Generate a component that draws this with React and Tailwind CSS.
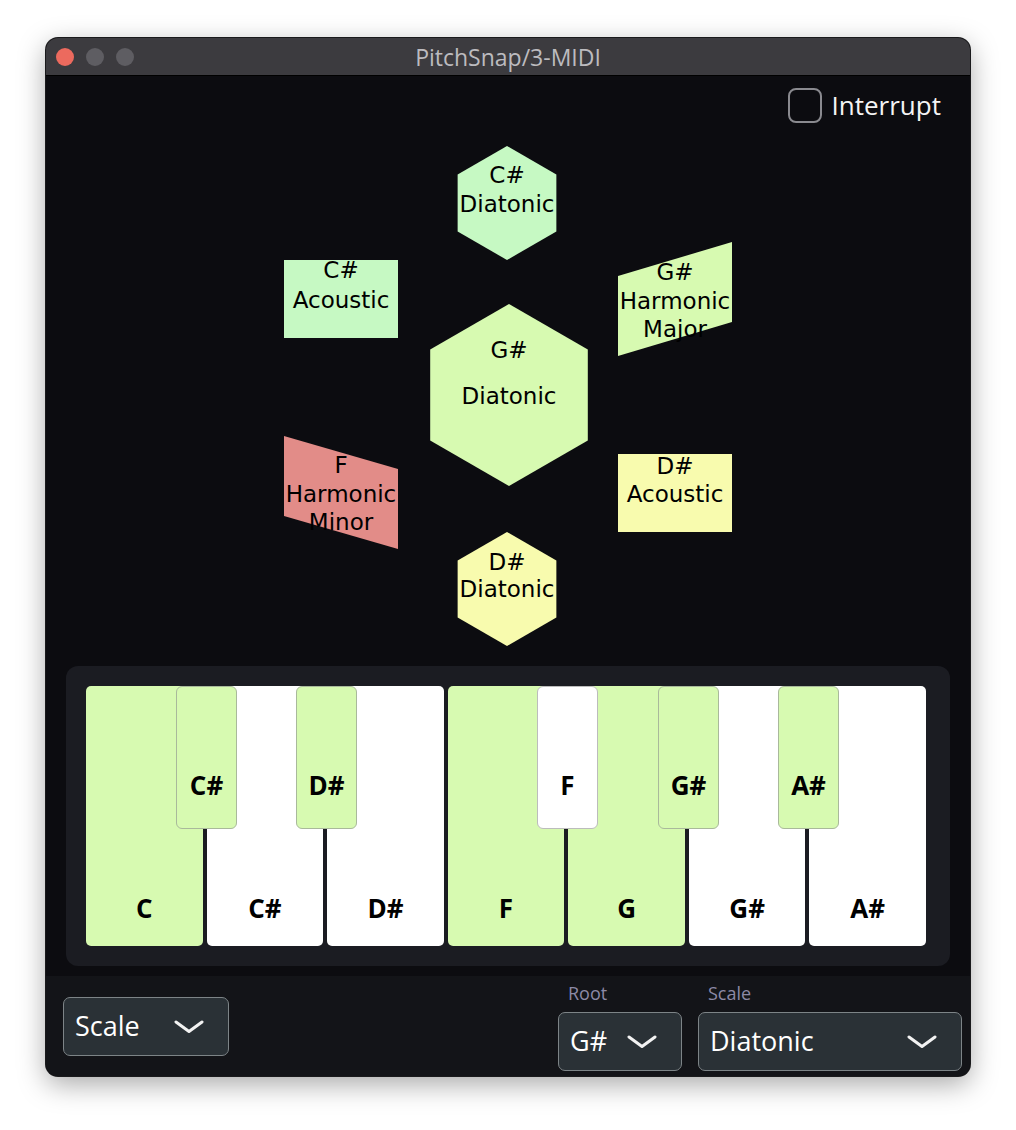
import React from 'react';

const hexPoints = (cx, cy, r) => {
  const w = (Math.sqrt(3) / 2) * r;
  return [
    [cx, cy - r],
    [cx + w, cy - r / 2],
    [cx + w, cy + r / 2],
    [cx, cy + r],
    [cx - w, cy + r / 2],
    [cx - w, cy - r / 2],
  ]
    .map((p) => p.join(','))
    .join(' ');
};

// shapes of the scale map, in page coordinates
const shapes = [
  { points: hexPoints(507, 203, 57), fill: '#c6f9c3', x: 507, lines: [['C#', 183], ['Diatonic', 212]] },
  { points: '284,260 398,260 398,338 284,338', fill: '#c6f9c3', x: 341, lines: [['C#', 278], ['Acoustic', 308]] },
  { points: '618,276 732,242 732,322 618,356', fill: '#d7fab1', x: 675, lines: [['G#', 280], ['Harmonic', 309], ['Major', 337]] },
  { points: hexPoints(509, 395, 91), fill: '#d7fab1', x: 509, lines: [['G#', 358], ['Diatonic', 404]] },
  { points: '284,436 398,469 398,549 284,516', fill: '#e28c88', x: 341, lines: [['F', 473], ['Harmonic', 502], ['Minor', 530]] },
  { points: '618,454 732,454 732,532 618,532', fill: '#f8fbae', x: 675, lines: [['D#', 474], ['Acoustic', 502]] },
  { points: hexPoints(507, 589, 57), fill: '#f8fbae', x: 507, lines: [['D#', 570], ['Diatonic', 597]] },
];

const whiteKeys = [
  { label: 'C', on: true },
  { label: 'C#', on: false },
  { label: 'D#', on: false },
  { label: 'F', on: true },
  { label: 'G', on: true },
  { label: 'G#', on: false },
  { label: 'A#', on: false },
];

const blackKeys = [
  { label: 'C#', on: true, pos: 'left-[90px]' },
  { label: 'D#', on: true, pos: 'left-[210px]' },
  { label: 'F', on: false, pos: 'left-[451px]' },
  { label: 'G#', on: true, pos: 'left-[572px]' },
  { label: 'A#', on: true, pos: 'left-[692px]' },
];

function Chevron() {
  return (
    <svg width="30" height="14" viewBox="0 0 30 14" fill="none">
      <path d="M2 2 L15 11.5 L28 2" stroke="#f2f2f2" strokeWidth="3" strokeLinecap="round" strokeLinejoin="round" />
    </svg>
  );
}

function Dropdown({ value, width }) {
  return (
    <div
      className={`${width} h-[59px] flex items-center justify-between pl-[11px] pr-[24px] rounded-[7px] border-[1.5px] border-[#7d8487] bg-[#2a3136] text-[27px] text-white`}
    >
      <span>{value}</span>
      <Chevron />
    </div>
  );
}

export default function App() {
  return (
    <div className="w-[1016px] h-[1130px] bg-white pt-[38px] pl-[46px]" style={{ fontFamily: '"Open Sans", "Noto Sans", sans-serif' }}>
      <div className="w-[924px] h-[1038px] rounded-[12px] overflow-hidden shadow-[0_0_0_1px_#1a1a1c,0_8px_28px_rgba(0,0,0,0.35)] flex flex-col bg-[#0c0c10]">
        {/* Title bar */}
        <div className="h-[38px] shrink-0 bg-[#3c3b3f] relative flex items-center justify-center border-b border-black">
          <div className="absolute left-[10px] top-[10px] flex gap-[12px]">
            <span className="w-[18px] h-[18px] rounded-full bg-[#ec6a5e]" />
            <span className="w-[18px] h-[18px] rounded-full bg-[#5e5d62]" />
            <span className="w-[18px] h-[18px] rounded-full bg-[#5e5d62]" />
          </div>
          <span className="text-[23px] leading-[30px] text-[#bcbbbf]">PitchSnap/3-MIDI</span>
        </div>

        {/* Main */}
        <div className="flex-1 flex flex-col">
          <div className="relative h-[590px]">
            <svg className="absolute inset-0" width="924" height="590" viewBox="46 76 924 590">
              {shapes.map((s, i) => (
                <g key={i}>
                  <polygon points={s.points} fill={s.fill} />
                  {s.lines.map(([t, y]) => (
                    <text
                      key={t + y}
                      x={s.x}
                      y={y}
                      textAnchor="middle"
                      fill="#000"
                      fontSize="23"
                      fontFamily='"DejaVu Sans", sans-serif'
                    >
                      {t}
                    </text>
                  ))}
                </g>
              ))}
            </svg>
            <div className="relative flex justify-end pt-[10px] pr-[29px]">
              <label className="flex items-center gap-[10px] text-[26px] text-[#f4f4f4]">
                <span className="w-[34px] h-[35px] rounded-[8px] border-2 border-[#8a8a8f]" />
                <span>Interrupt</span>
              </label>
            </div>
          </div>

          {/* Keyboard */}
          <div className="mx-[20px] h-[300px] rounded-[12px] bg-[#1b1c22] pt-[20px] pl-[20px]">
            <div className="relative w-[840px] h-[260px] grid grid-cols-7 gap-[4px]">
              {whiteKeys.map((k) => (
                <div
                  key={k.label}
                  className={`rounded-[5px] flex items-end justify-center pb-[25px] text-[26px] leading-[26px] font-bold text-black ${
                    k.on ? 'bg-[#d7fab1]' : 'bg-white'
                  }`}
                >
                  {k.label}
                </div>
              ))}
              {blackKeys.map((k) => (
                <div
                  key={k.label}
                  className={`absolute top-0 w-[61px] h-[143px] rounded-[6px] border flex items-end justify-center pb-[30px] text-[26px] leading-[26px] font-bold text-black ${k.pos} ${
                    k.on ? 'bg-[#d7fab1] border-[#a9b99b]' : 'bg-white border-[#bcbcbc]'
                  }`}
                >
                  {k.label}
                </div>
              ))}
            </div>
          </div>
        </div>

        {/* Bottom bar */}
        <div className="h-[100px] shrink-0 mt-[10px] bg-[#131418] flex items-start justify-between pl-[17px] pr-[8px]">
          <div className="mt-[21px]">
            <Dropdown value="Scale" width="w-[166px]" />
          </div>
          <div className="flex gap-[16px]">
            <div className="flex flex-col">
              <span className="mt-[7px] h-[20px] leading-[20px] pl-[10px] text-[18px] text-[#8c89a6]">Root</span>
              <div className="mt-[9px]">
                <Dropdown value="G#" width="w-[124px]" />
              </div>
            </div>
            <div className="flex flex-col">
              <span className="mt-[7px] h-[20px] leading-[20px] pl-[10px] text-[18px] text-[#8c89a6]">Scale</span>
              <div className="mt-[9px]">
                <Dropdown value="Diatonic" width="w-[264px]" />
              </div>
            </div>
          </div>
        </div>
      </div>
    </div>
  );
}
